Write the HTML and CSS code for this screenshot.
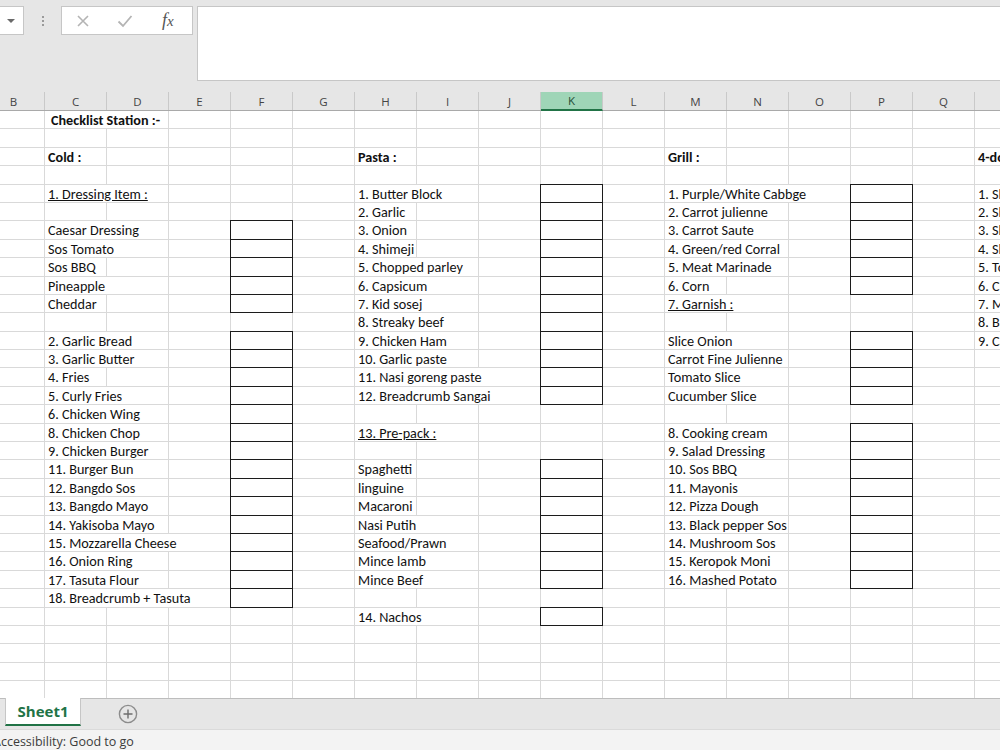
FILE: index.html
```html
<!DOCTYPE html>
<html lang="en">
<head>
  <meta charset="UTF-8" />
  <title>Checklist Station - Excel</title>
  <link rel="stylesheet" href="styles.css">
</head>
<body>
  <div class="toolbar">
    <div class="name-box"><span class="name-arrow"></span></div>
    <div class="grip"><span></span><span></span><span></span></div>
    <div class="fx-box">
      <svg class="fx-icon" width="14" height="14" viewBox="0 0 14 14"><path d="M2 2 L12 12 M12 2 L2 12" stroke="#b4b4b4" stroke-width="1.6" fill="none"/></svg>
      <svg class="fx-icon" width="16" height="14" viewBox="0 0 16 14"><path d="M1.5 7.5 L6 12 L14.5 2" stroke="#b4b4b4" stroke-width="1.8" fill="none"/></svg>
      <span class="fx-label">f<i>x</i></span>
    </div>
    <div class="formula-input"></div>
  </div>

  <div class="col-headers">
    <div>B</div><div>C</div><div>D</div><div>E</div><div>F</div><div>G</div><div>H</div><div>I</div>
    <div>J</div><div class="active">K</div><div>L</div><div>M</div><div>N</div><div>O</div><div>P</div><div>Q</div><div>R</div>
  </div>

  <div class="sheet">
    <div class="row"><div class="t in-c w2 bold indent">Checklist Station :-</div></div>
    <div class="row"></div>
    <div class="row">
      <div class="t in-c bold">Cold :</div>
      <div class="t in-h bold">Pasta :</div>
      <div class="t in-m bold">Grill :</div>
      <div class="t in-r bold">4-door Chiller :</div>
    </div>
    <div class="row"></div>
    <div class="row">
      <div class="t in-c w2 under">1. Dressing Item :</div>
      <div class="t in-h w2">1. Butter Block</div><div class="bx in-k"></div>
      <div class="t in-m w3">1. Purple/White Cabbge</div><div class="bx in-p"></div>
      <div class="t in-r">1. Sliced Cheese</div>
    </div>
    <div class="row">
      <div class="t in-h">2. Garlic</div><div class="bx in-k"></div>
      <div class="t in-m w2">2. Carrot julienne</div><div class="bx in-p"></div>
      <div class="t in-r">2. Sliced Ham</div>
    </div>
    <div class="row">
      <div class="t in-c w2">Caesar Dressing</div><div class="bx in-f"></div>
      <div class="t in-h">3. Onion</div><div class="bx in-k"></div>
      <div class="t in-m w2">3. Carrot Saute</div><div class="bx in-p"></div>
      <div class="t in-r">3. Shredded Cheese</div>
    </div>
    <div class="row">
      <div class="t in-c w2">Sos Tomato</div><div class="bx in-f"></div>
      <div class="t in-h">4. Shimeji</div><div class="bx in-k"></div>
      <div class="t in-m w2">4. Green/red Corral</div><div class="bx in-p"></div>
      <div class="t in-r">4. Sliced Beef</div>
    </div>
    <div class="row">
      <div class="t in-c">Sos BBQ</div><div class="bx in-f"></div>
      <div class="t in-h w2">5. Chopped parley</div><div class="bx in-k"></div>
      <div class="t in-m w2">5. Meat Marinade</div><div class="bx in-p"></div>
      <div class="t in-r">5. Tortilla</div>
    </div>
    <div class="row">
      <div class="t in-c w2">Pineapple</div><div class="bx in-f"></div>
      <div class="t in-h w2">6. Capsicum</div><div class="bx in-k"></div>
      <div class="t in-m">6. Corn</div><div class="bx in-p"></div>
      <div class="t in-r">6. Chicken Strip</div>
    </div>
    <div class="row">
      <div class="t in-c">Cheddar</div><div class="bx in-f"></div>
      <div class="t in-h w2">7. Kid sosej</div><div class="bx in-k"></div>
      <div class="t in-m w2 under">7. Garnish :</div>
      <div class="t in-r">7. Mozzarella</div>
    </div>
    <div class="row">
      <div class="t in-h w2">8. Streaky beef</div><div class="bx in-k"></div>
      <div class="t in-r">8. Bacon</div>
    </div>
    <div class="row">
      <div class="t in-c w2">2. Garlic Bread</div><div class="bx in-f"></div>
      <div class="t in-h w2">9. Chicken Ham</div><div class="bx in-k"></div>
      <div class="t in-m w2">Slice Onion</div><div class="bx in-p"></div>
      <div class="t in-r">9. Cabbage</div>
    </div>
    <div class="row">
      <div class="t in-c w2">3. Garlic Butter</div><div class="bx in-f"></div>
      <div class="t in-h w2">10. Garlic paste</div><div class="bx in-k"></div>
      <div class="t in-m w2">Carrot Fine Julienne</div><div class="bx in-p"></div>
    </div>
    <div class="row">
      <div class="t in-c">4. Fries</div><div class="bx in-f"></div>
      <div class="t in-h w3">11. Nasi goreng paste</div><div class="bx in-k"></div>
      <div class="t in-m w2">Tomato Slice</div><div class="bx in-p"></div>
    </div>
    <div class="row">
      <div class="t in-c w2">5. Curly Fries</div><div class="bx in-f"></div>
      <div class="t in-h w3">12. Breadcrumb Sangai</div><div class="bx in-k"></div>
      <div class="t in-m w2">Cucumber Slice</div><div class="bx in-p"></div>
    </div>
    <div class="row">
      <div class="t in-c w2">6. Chicken Wing</div><div class="bx in-f"></div>
    </div>
    <div class="row">
      <div class="t in-c w2">8. Chicken Chop</div><div class="bx in-f"></div>
      <div class="t in-h w2 under">13. Pre-pack :</div>
      <div class="t in-m w2">8. Cooking cream</div><div class="bx in-p"></div>
    </div>
    <div class="row">
      <div class="t in-c w2">9. Chicken Burger</div><div class="bx in-f"></div>
      <div class="t in-m w2">9. Salad Dressing</div><div class="bx in-p"></div>
    </div>
    <div class="row">
      <div class="t in-c w2">11. Burger Bun</div><div class="bx in-f"></div>
      <div class="t in-h">Spaghetti</div><div class="bx in-k"></div>
      <div class="t in-m w2">10. Sos BBQ</div><div class="bx in-p"></div>
    </div>
    <div class="row">
      <div class="t in-c w2">12. Bangdo Sos</div><div class="bx in-f"></div>
      <div class="t in-h">linguine</div><div class="bx in-k"></div>
      <div class="t in-m w2">11. Mayonis</div><div class="bx in-p"></div>
    </div>
    <div class="row">
      <div class="t in-c w2">13. Bangdo Mayo</div><div class="bx in-f"></div>
      <div class="t in-h">Macaroni</div><div class="bx in-k"></div>
      <div class="t in-m w2">12. Pizza Dough</div><div class="bx in-p"></div>
    </div>
    <div class="row">
      <div class="t in-c w2">14. Yakisoba Mayo</div><div class="bx in-f"></div>
      <div class="t in-h w2">Nasi Putih</div><div class="bx in-k"></div>
      <div class="t in-m w2">13. Black pepper Sos</div><div class="bx in-p"></div>
    </div>
    <div class="row">
      <div class="t in-c w3">15. Mozzarella Cheese</div><div class="bx in-f"></div>
      <div class="t in-h w2">Seafood/Prawn</div><div class="bx in-k"></div>
      <div class="t in-m w2">14. Mushroom Sos</div><div class="bx in-p"></div>
    </div>
    <div class="row">
      <div class="t in-c w2">16. Onion Ring</div><div class="bx in-f"></div>
      <div class="t in-h w2">Mince lamb</div><div class="bx in-k"></div>
      <div class="t in-m w2">15. Keropok Moni</div><div class="bx in-p"></div>
    </div>
    <div class="row">
      <div class="t in-c w2">17. Tasuta Flour</div><div class="bx in-f"></div>
      <div class="t in-h w2">Mince Beef</div><div class="bx in-k"></div>
      <div class="t in-m w2">16. Mashed Potato</div><div class="bx in-p"></div>
    </div>
    <div class="row">
      <div class="t in-c w3">18. Breadcrumb + Tasuta</div><div class="bx in-f"></div>
    </div>
    <div class="row">
      <div class="t in-h w2">14. Nachos</div><div class="bx in-k"></div>
    </div>
    <div class="row"></div>
    <div class="row"></div>
    <div class="row"></div>
    <div class="row"></div>
  </div>

  <div class="tabbar">
    <div class="tab">Sheet1</div>
    <div class="add-sheet">
      <svg width="20" height="20" viewBox="0 0 20 20"><circle cx="10" cy="10" r="8.6" stroke="#8c8c8c" stroke-width="1.4" fill="none"/><path d="M10 5.5 V14.5 M5.5 10 H14.5" stroke="#6e6e6e" stroke-width="1.4"/></svg>
    </div>
  </div>

  <div class="statusbar">Accessibility: Good to go</div>
</body>
</html>
```

FILE: styles.css
```css
* {
  margin: 0;
  padding: 0;
  box-sizing: border-box;
}

body {
  width: 1000px;
  height: 750px;
  overflow: hidden;
  display: flex;
  flex-direction: column;
  background-color: #e6e6e6;
  font-family: Calibri, Carlito, Lato, sans-serif;
}

/* formula bar */
.toolbar {
  height: 92px;
  flex-shrink: 0;
  display: flex;
  align-items: flex-start;
  padding-top: 6px;
}

.name-box {
  width: 25px;
  height: 29px;
  margin-left: -1px;
  background-color: white;
  border: 1px solid #c6c6c6;
  display: flex;
  align-items: center;
  justify-content: flex-end;
  padding-right: 8px;
}

.name-arrow {
  width: 0;
  height: 0;
  border-left: 4px solid transparent;
  border-right: 4px solid transparent;
  border-top: 4px solid #6a6a6a;
}

.grip {
  width: 37px;
  height: 29px;
  display: flex;
  flex-direction: column;
  align-items: center;
  justify-content: center;
  gap: 2px;
}

.grip span {
  width: 2px;
  height: 2px;
  background-color: #9a9a9a;
}

.fx-box {
  width: 132px;
  height: 29px;
  background-color: white;
  border: 1px solid #c6c6c6;
  display: flex;
  align-items: center;
  padding-left: 14px;
  gap: 27px;
}

.fx-label {
  font-family: "Liberation Serif", serif;
  font-style: italic;
  font-size: 18px;
  color: #555;
  margin-left: 2px;
}

.fx-label i {
  font-size: 15px;
}

.formula-input {
  flex: 1;
  height: 75px;
  margin-left: 4px;
  margin-right: -2px;
  background-color: white;
  border: 1px solid #c6c6c6;
}

/* column letters */
.col-headers {
  height: 19px;
  flex-shrink: 0;
  margin-left: -17px;
  display: grid;
  grid-template-columns: repeat(17, 62px);
  border-bottom: 1px solid #a9a9a9;
}

.col-headers div {
  border-right: 1px solid #c9c9c9;
  display: flex;
  align-items: center;
  justify-content: center;
  font-family: "Open Sans", sans-serif;
  font-size: 11.5px;
  color: #444;
}

.col-headers .active {
  background-color: #9fd5b7;
  color: #1f4e35;
  border-bottom: 2px solid #217346;
  margin-bottom: -1px;
}

/* cells */
.sheet {
  flex: 1;
  min-height: 0;
  width: 1054px;
  margin-left: -17px;
  overflow: hidden;
  background-color: white;
  background-image: repeating-linear-gradient(to right, transparent 0 61px, #d9d9d9 61px 62px);
}

.row {
  height: 18.4px;
  display: grid;
  grid-template-columns: repeat(17, 62px);
  border-bottom: 1px solid #d9d9d9;
}

.row > div {
  grid-row: 1;
}

.t {
  background-color: white;
  border-right: 1px solid #d9d9d9;
  padding: 2px 0 0 3px;
  font-size: 14.2px;
  line-height: 15px;
  color: #111;
  white-space: nowrap;
}

.bold {
  font-weight: 700;
}

.under {
  text-decoration: underline;
}

.indent {
  padding-left: 6px;
}

.bx {
  margin: -1px 0 -1px -1px;
  border: 1px solid #1c1c1c;
}

.in-c { grid-column-start: 2; }
.in-f { grid-column-start: 5; }
.in-h { grid-column-start: 7; }
.in-k { grid-column-start: 10; }
.in-m { grid-column-start: 12; }
.in-p { grid-column-start: 15; }
.in-r { grid-column-start: 17; }

.w2 { grid-column-end: span 2; }
.w3 { grid-column-end: span 3; }

/* sheet tabs */
.tabbar {
  height: 31px;
  flex-shrink: 0;
  border-top: 1px solid #bdbdbd;
  display: flex;
  align-items: flex-start;
  padding-left: 5px;
}

.tab {
  width: 76px;
  height: 28px;
  margin-top: -1px;
  background-color: white;
  border-left: 1px solid #c6c6c6;
  border-right: 1px solid #c6c6c6;
  border-bottom: 2px solid #217346;
  display: flex;
  align-items: center;
  justify-content: center;
  font-family: "Open Sans", sans-serif;
  font-size: 15px;
  font-weight: 700;
  color: #217346;
}

.add-sheet {
  margin-left: 37px;
  margin-top: 5px;
  height: 20px;
}

.statusbar {
  height: 21px;
  flex-shrink: 0;
  background-color: #f3f3f3;
  border-top: 1px solid #dadada;
  margin-left: -7px;
  padding-top: 3px;
  font-family: "Open Sans", sans-serif;
  font-size: 12.5px;
  line-height: 18px;
  color: #3c3c3c;
}
```
